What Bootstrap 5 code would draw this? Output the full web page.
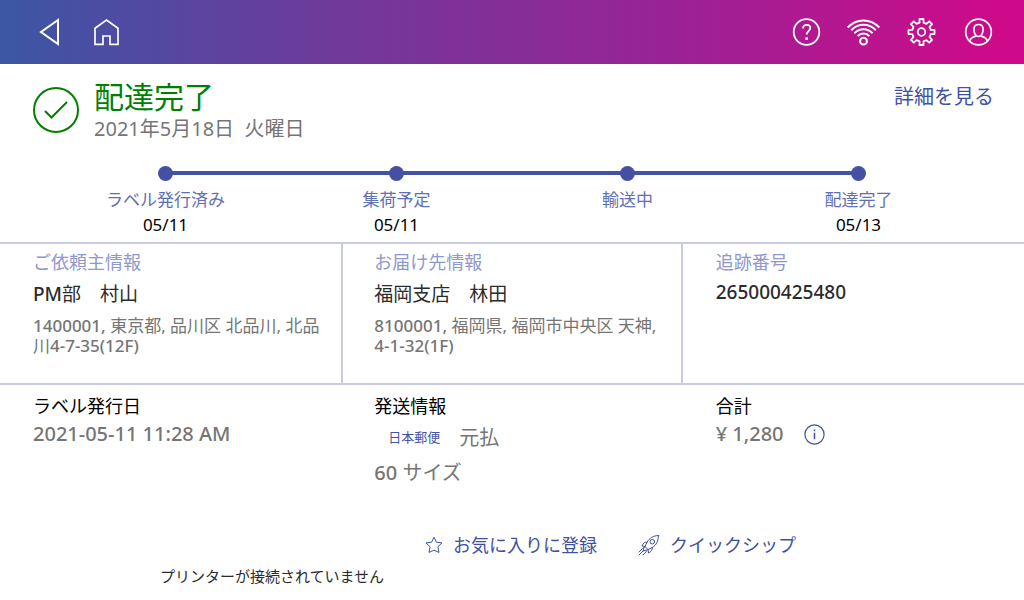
<!DOCTYPE html>
<html lang="ja">
<head>
<meta charset="utf-8">
<meta name="viewport" content="width=device-width, initial-scale=1">
<title>配達完了</title>
<link href="https://cdn.jsdelivr.net/npm/bootstrap@5.3.0/dist/css/bootstrap.min.css" rel="stylesheet">
<style>
  :root { --ink-blue: #3f51a3; --rule: #c9cce3; --muted: #757575; }
  body { font-family: "Noto Sans", "Noto Sans CJK JP", sans-serif; color: #000; background: #fff; }
  svg { display: block; fill: none; stroke: currentColor; overflow: visible; }
  h1, h2, p { margin: 0; }
  .topbar { height: 64px; padding: 0 30px 0 36px; background: linear-gradient(90deg, #3c57a4 0%, #4e4ba2 12%, #703a9a 33%, #9a2396 65%, #cf0a8a 98%); }
  .icon-btn { padding: 0; border: 0; background: none; color: #fff; }
  .nav-set { gap: 28px; }
  .tool-set { gap: 26px; }
  .status { padding: 15px 30px 0 33px; }
  .status svg { color: #008000; margin-top: 8px; }
  .status-text { padding-left: 15px; }
  .status h1 { font-size: 30px; line-height: 36px; font-weight: 400; color: #008000; }
  .status p { font-size: 20px; line-height: 27px; color: var(--muted); }
  .cjk { font-weight: 400; }
  .blue-link { color: var(--ink-blue); text-decoration: none; font-size: 20px; line-height: 36px; }
  .steps { padding: 24px 50px 5px; font-size: 17px; line-height: 26px; }
  .step-item { position: relative; text-align: center; color: #6170b5; }
  .step-item + .step-item::before { content: ""; position: absolute; top: 5px; right: 50%; width: 100%; height: 4px; background: #4353a4; }
  .step-dot { position: relative; width: 15px; height: 15px; margin: 0 auto 6px; border-radius: 50%; background: #4550a2; }
  .step-item time { display: block; line-height: 24px; color: #000; }
  .ruled { border-top: 2px solid var(--rule); border-bottom: 2px solid var(--rule); }
  .cell { padding: 4px 16px 0 33px; min-height: 139px; }
  .cell-mid { border-left: 2px solid var(--rule); border-right: 2px solid var(--rule); padding-left: 31px; }
  .cell h2 { font-size: 18px; line-height: 28px; margin-bottom: 2px; font-weight: 400; color: #8f98cd; }
  .cell .who { font-size: 19px; line-height: 32px; font-weight: 500; color: #2b2b2b; }
  .cell .tracking { line-height: 28px; }
  .cell address { font-size: 17px; line-height: 20px; font-weight: 500; color: var(--muted); margin: 6px 0 0; }
  .info { padding: 8px 16px 0 33px; font-size: 20px; font-weight: 500; color: var(--muted); }
  .info h2 { font-size: 18px; line-height: 27px; font-weight: 400; color: #000; }
  .info p { line-height: 28px; }
  .info .tall { line-height: 35px; }
  .price { gap: 20px; }
  .carrier { font-size: 13px; font-weight: 400; color: #4355a8; margin: 0 19px 0 14px; }
  .actions { gap: 41px; padding: 41px 0 0 197px; }
  .action-btn { gap: 10px; color: var(--ink-blue); border: 0; padding: 0; background: none; font-size: 18px; line-height: 28px; }
  .notice { font-size: 15px; line-height: 24px; color: #2b2b2b; padding: 5px 0 0 160px; }
</style>
</head>
<body>
<header class="topbar d-flex align-items-center justify-content-between">
  <nav class="nav-set d-flex align-items-center" aria-label="ナビゲーション">
    <button class="icon-btn" type="button" aria-label="戻る">
      <svg width="28" height="32" viewBox="0 0 28 32" stroke-width="2"><path d="M22 4 5 16l17 12z"/></svg>
    </button>
    <button class="icon-btn" type="button" aria-label="ホーム">
      <svg width="30" height="32" viewBox="0 0 30 32" stroke-width="1.7"><path d="M3 12.3 14.500 4 26 12.300V28.300h-8V20h-7v8.300H3z"/></svg>
    </button>
  </nav>
  <div class="tool-set d-flex align-items-center">
    <button class="icon-btn" type="button" aria-label="ヘルプ">
      <svg width="30" height="32" viewBox="0 0 30 32" stroke-width="1.8"><circle cx="14.500" cy="16" r="12.800"/><path d="M11 12.500c.1-2.300 1.500-3.700 3.600-3.700s3.700 1.400 3.700 3.300c0 3-3.700 3-3.700 6.400"/><path d="M14.600 21.300v2.500" stroke-width="2.500"/></svg>
    </button>
    <button class="icon-btn" type="button" aria-label="Wi-Fi">
      <svg width="34" height="32" viewBox="2 0 34 32" stroke-width="2"><circle cx="17.500" cy="25.200" r="3.400"/><path d="M1.700 11.500C10.500 2 24.500 2 33.300 11.500M5.200 14.200c7-7.200 17.600-7.200 24.600 0M8.400 17.200c5.200-5.300 13-5.300 18.200 0M11.700 20.200c3.200-3.500 8.400-3.500 11.600 0"/></svg>
    </button>
    <button class="icon-btn" type="button" aria-label="設定">
      <svg width="30" height="32" viewBox="2 0 30 32" stroke-width="1.800" stroke-linejoin="round"><circle cx="15.500" cy="16" r="3.800"/><path d="M13.500 3h4v3.700l3 1.200 2.700-2.600 2.900 2.900-2.600 2.700 1.200 3h3.800v4.200h-3.800l-1.200 3 2.600 2.700-2.900 2.900-2.700-2.600-3 1.200V29h-4v-3.700l-3-1.200-2.700 2.600-2.900-2.900 2.600-2.700-1.200-3H2.500v-4.200h3.800l1.200-3-2.600-2.700 2.900-2.900 2.700 2.600 3-1.200z"/></svg>
    </button>
    <button class="icon-btn" type="button" aria-label="アカウント">
      <svg width="30" height="32" viewBox="0 0 30 32" stroke-width="1.700"><circle cx="14.500" cy="16" r="12.800"/><path d="M14.500 8.500c-3 0-4.600 2-4.600 5 0 3.700 1.800 7 4.600 7s4.600-3.300 4.600-7c0-3-1.600-5-4.600-5zM5.700 25c.8-2.700 3.500-4.200 6.300-4.800M23.300 25c-.8-2.700-3.500-4.200-6.300-4.800"/></svg>
    </button>
  </div>
</header>

<main>
  <section class="status d-flex align-items-start">
    <svg class="flex-shrink-0" width="46" height="46" viewBox="0 0 46 46" stroke-width="2"><circle cx="23" cy="23" r="22"/><path d="m12 24 6.500 6.500L34 15"/></svg>
    <div class="status-text flex-grow-1">
      <h1>配達完了</h1>
      <p>2021年5月18日&nbsp; 火曜日</p>
    </div>
    <a class="blue-link" href="#">詳細を見る</a>
  </section>

  <section class="steps d-flex">
    <div class="step-item col-3"><div class="step-dot"></div>ラベル発行済み<time>05/11</time></div>
    <div class="step-item col-3"><div class="step-dot"></div>集荷予定<time>05/11</time></div>
    <div class="step-item col-3"><div class="step-dot"></div>輸送中</div>
    <div class="step-item col-3"><div class="step-dot"></div>配達完了<time>05/13</time></div>
  </section>

  <section class="ruled row g-0">
    <div class="cell col-4">
      <h2>ご依頼主情報</h2>
      <p class="who">PM<span class="cjk">部　村山</span></p>
      <address>1400001, <span class="cjk">東京都, 品川区 北品川, 北品川</span>4-7-35(12F)</address>
    </div>
    <div class="cell cell-mid col-4">
      <h2>お届け先情報</h2>
      <p class="who"><span class="cjk">福岡支店　林田</span></p>
      <address>8100001, <span class="cjk">福岡県, 福岡市中央区 天神,</span> 4-1-32(1F)</address>
    </div>
    <div class="cell col-4">
      <h2>追跡番号</h2>
      <p class="who tracking">265000425480</p>
    </div>
  </section>

  <section class="row g-0">
    <div class="info col-4">
      <h2>ラベル発行日</h2>
      <p>2021-05-11 11:28 AM</p>
    </div>
    <div class="info col-4">
      <h2>発送情報</h2>
      <p class="tall d-flex align-items-center"><span class="carrier">日本郵便</span><span class="cjk">元払</span></p>
      <p class="tall">60 <span class="cjk">サイズ</span></p>
    </div>
    <div class="info col-4">
      <h2>合計</h2>
      <p class="price d-flex align-items-center">¥ 1,280
        <button class="action-btn" type="button" aria-label="料金の詳細">
          <svg width="21" height="21" viewBox="0 0 21 21" stroke-width="1.200"><circle cx="10.500" cy="10.500" r="9.600"/><path d="M10.500 8.800v6.400M10.500 5.500v1.700" stroke-width="1.500"/></svg>
        </button>
      </p>
    </div>
  </section>

  <div class="actions d-flex justify-content-center">
    <button class="action-btn d-flex align-items-center" type="button">
      <svg width="18" height="18" viewBox="0 0 18 18" stroke-width="1" stroke-linejoin="round"><path d="m9 1.200 2.400 5 5.600.7-4.100 3.900 1.100 5.600L9 14.200l-5 2.200 1.100-5.600L1 6.900l5.600-.7z"/></svg>
      お気に入りに登録
    </button>
    <button class="action-btn d-flex align-items-center" type="button">
      <svg width="22" height="22" viewBox="0 0 22 22" stroke-width="1" stroke-linejoin="round" stroke-linecap="round"><path d="M20.500 1.500c-5.500.2-9 2.500-11.500 6.700l-2 4.300 3 3 4.300-2c4.200-2.500 6-6.500 6.200-12zM9 8.200c-2.200-.5-3.700.7-5 3.800l3 .5M14.200 13.500c.5 2.200-1 4.200-3.700 5.500l-.5-3.500M7 12.500l-2 2M10 15.500l-2 2M6 13.500l-1 3.500 3.500-1M4 15l-3 3M5 17l-4 4M8 18l-3 3"/><circle cx="14.300" cy="7.700" r="2.300"/></svg>
      クイックシップ
    </button>
  </div>
  <p class="notice" role="status">プリンターが接続されていません</p>
</main>
<script src="https://cdn.jsdelivr.net/npm/bootstrap@5.3.0/dist/js/bootstrap.bundle.min.js"></script>
</body>
</html>
